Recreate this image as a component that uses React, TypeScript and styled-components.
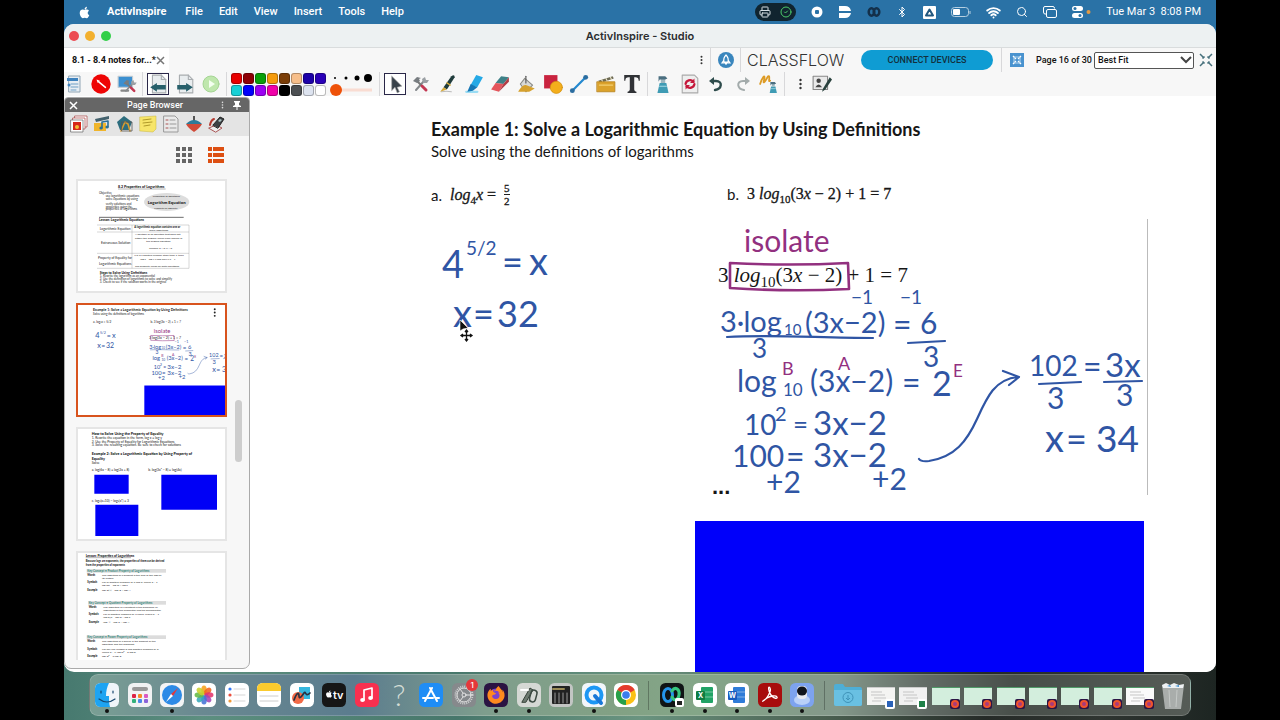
import React from "react";
import styled, { createGlobalStyle } from "styled-components";
import { FaApple, FaFirefoxBrowser } from "react-icons/fa";
import { Bluetooth, Wifi, Search, Printer, CircleCheck } from "lucide-react";

const ui = `Roboto, "Noto Sans", sans-serif`;
const mac = `Inter, "Liberation Sans", sans-serif`;
const INK = "#2f55a4";
const PLUM = "#92307f";

const Global = createGlobalStyle`
  * { box-sizing: border-box; }
  body { margin: 0; background: #000; }
  button, select { font: inherit; color: inherit; border: 0; padding: 0; background: none; }
  svg { display: block; flex: none; }
`;

const Screen = styled.div`
  height: 100vh;
  padding: 0 5%;
  background: #000;
`;
const Desktop = styled.div`
  height: 100%;
  display: flex;
  flex-direction: column;
  overflow: hidden;
  background:
    linear-gradient(#2a72a6, #2a72a6) top / 100% 48px no-repeat,
    linear-gradient(90deg, #47796f 0%, #5d8f80 12%, #47776b 34%, #6a9480 50%, #4a5f50 66%, #262b28 80%, #2f3531 90%, #1d2522 100%);
`;

/* menu bar */
const MenuBar = styled.header`
  flex: none;
  height: 24px;
  display: flex;
  align-items: center;
  padding: 0 15px 0 14px;
  color: #fff;
  font: 500 11px/24px Roboto, sans-serif;
`;
const MenuItem = styled.button<{ $strong?: boolean }>`
  margin-left: 16px;
  padding-right: ${(p) => (p.$strong ? 3 : 0)}px;
  font-weight: ${(p) => (p.$strong ? 700 : 500)};
`;
const Status = styled.div`
  margin-left: auto;
  display: flex;
  align-items: center;
  gap: 15px;
`;
const Pill = styled.div`
  display: flex;
  align-items: center;
  justify-content: space-between;
  width: 41px;
  height: 18px;
  padding: 0 4px;
  border-radius: 9px;
  background: #10242f;
`;
const Clock = styled.time`
  font: 400 11px/24px Roboto, sans-serif;
`;

/* window */
const Window = styled.main`
  flex: 1;
  min-height: 0;
  display: flex;
  flex-direction: column;
  border-radius: 10px;
  overflow: hidden;
  background: #fff;
`;
const TitleBar = styled.div`
  flex: none;
  height: 24px;
  display: grid;
  grid-template-columns: 1fr auto 1fr;
  align-items: center;
  padding: 0 5px;
  background: #edf1f2;
  border-bottom: 1px solid #d9dcdd;
  color: #2b2d2f;
  font: 600 11px/22px ${mac};
`;
const Lights = styled.div`
  display: flex;
  gap: 6px;
`;
const Light = styled.button<{ $color: string }>`
  width: 10px;
  height: 10px;
  border-radius: 50%;
  background: ${(p) => p.$color};
`;
const Bar = styled.div`
  flex: none;
  height: 24px;
  display: flex;
  align-items: center;
  background: #f7f7f7;
  color: #111;
  font: 500 9px/14px ${ui};
  white-space: nowrap;
`;
const Tab = styled.div`
  height: 24px;
  width: 105px;
  display: flex;
  align-items: center;
  justify-content: space-between;
  padding: 0 8px;
  background: #fff;
  font-weight: 700;
`;
const Rule = styled.div<{ $gap?: number }>`
  flex: none;
  width: 1px;
  height: 24px;
  margin: 0 ${(p) => p.$gap ?? 5}px;
  background: #d8d8da;
`;
const Right = styled.div`
  margin-left: auto;
  padding-right: 3px;
  display: flex;
  align-items: center;
`;
const Brand = styled.a`
  width: 102px;
  color: #333;
  text-decoration: none;
  font: 300 16px/24px ${mac};
`;
const Connect = styled.button`
  width: 132px;
  height: 20px;
  margin-left: 12px;
  border-radius: 10px;
  background: #0f9cd3;
  color: #12303d;
  font-weight: 500;
`;
const PageCount = styled.span`
  width: 58px;
  margin-left: 12px;
`;
const FitWrap = styled.label`
  display: flex;
  align-items: center;
  width: 100px;
  height: 17px;
  margin-right: 5px;
  border: 1px solid #555;
  border-radius: 2px;
  background: #fff;
`;
const Fit = styled.select`
  flex: 1;
  appearance: none;
  padding-left: 3px;
  line-height: 14px;
`;
const Group = styled.div<{ $w?: number }>`
  flex: none;
  display: flex;
  justify-content: space-between;
  align-items: center;
  width: ${(p) => (p.$w ? `${p.$w}px` : "auto")};
`;
const Tool = styled.button<{ $on?: boolean }>`
  width: 22px;
  height: 22px;
  display: grid;
  place-items: center;
  border: 1px solid ${(p) => (p.$on ? "#2a2748" : "transparent")};
  background: ${(p) => (p.$on ? "#fff" : "none")};
`;
const Palette = styled.div`
  display: grid;
  grid-template-columns: repeat(8, 11px);
  gap: 1px;
`;
const Swatch = styled.button<{ $c: string }>`
  height: 11px;
  border: 1px solid #0004;
  border-radius: 3px;
  background: ${(p) => p.$c};
`;

/* body */
const Body = styled.div`
  flex: 1;
  min-height: 0;
  display: flex;
`;
const Panel = styled.aside`
  flex: none;
  width: 186px;
  margin: 1px 0 3px;
  display: flex;
  flex-direction: column;
  overflow: hidden;
  border: 1px solid #aaa;
  border-radius: 4px 4px 7px 7px;
  background: #f7f7f7;
`;
const PanelHead = styled.div`
  flex: none;
  height: 14px;
  display: grid;
  grid-template-columns: 20px 1fr 20px;
  align-items: center;
  padding: 0 8px 0 4px;
  background: #666;
  color: #fff;
  text-align: center;
  font: 500 9px/14px ${ui};
`;
const PanelTools = styled.div`
  flex: none;
  height: 24px;
  display: flex;
  align-items: center;
  gap: 1px;
  padding-left: 3px;
  background: #e4e4e4;
`;
const Views = styled.div`
  flex: none;
  display: flex;
  justify-content: flex-end;
  gap: 16px;
  padding: 11px 25px 16px;
`;
const Scroller = styled.div`
  flex: 1;
  min-height: 0;
  display: flex;
  justify-content: space-between;
  margin-bottom: 8px;
  padding: 0 7px 0 11px;
`;
const Thumbs = styled.div`
  width: 151px;
  overflow: hidden;
  display: flex;
  flex-direction: column;
  gap: 10px;
`;
const Thumb = styled.button<{ $on?: boolean }>`
  flex: none;
  width: 151px;
  height: 114px;
  border: 2px solid ${(p) => (p.$on ? "#d8531d" : "#e5e5e5")};
  background: #fff;
  overflow: hidden;
`;
const Knob = styled.div`
  width: 7px;
  height: 62px;
  margin-top: 221px;
  border-radius: 4px;
  background: #cdcdcd;
`;

/* flipchart page */
const Board = styled.section`
  flex: 1;
  min-width: 0;
  position: relative;
  overflow: hidden;
  background: #fff;
  color: #161616;
`;
const Placed = styled.div<{ $x: number; $y: number }>`
  position: absolute;
  left: ${(p) => p.$x}px;
  top: ${(p) => p.$y}px;
  white-space: nowrap;
`;
const Heading = styled(Placed)`
  font: 700 18px/20px Lato, sans-serif;
`;
const Lead = styled(Placed)`
  font: 400 15px/20px Lato, sans-serif;
`;
const Problem = styled(Placed)<{ $big?: boolean }>`
  display: flex;
  align-items: center;
  font: ${(p) => (p.$big ? "400 21px/24px" : "400 16px/20px")} "Liberation Serif", serif;
  -webkit-text-stroke: ${(p) => (p.$big ? "0" : "0.3px #161616")};
  sub { font-size: ${(p) => (p.$big ? 15 : 11)}px; line-height: 1px; }
`;
const Letter = styled.span`
  margin-right: 8px;
  font: 400 15px/20px Lato, sans-serif;
  -webkit-text-stroke: 0;
`;
const Fraction = styled.span`
  display: inline-flex;
  flex-direction: column;
  margin-left: 8px;
  font: 400 11px/12px "Liberation Serif", serif;
  span + span { border-top: 1px solid #222; }
`;
const Dots = styled(Placed)`
  font: 700 22px/20px "Liberation Sans", sans-serif;
`;
const InkSheet = styled.svg`
  position: absolute;
  inset: 0;
  width: 100%;
  height: 100%;
`;

/* dock */
const Dock = styled.nav`
  flex: none;
  height: 42px;
  margin: 2px 25px 4px;
  padding: 0 1px;
  display: flex;
  border: 1px solid #ffffff30;
  border-radius: 9px;
  background: linear-gradient(90deg, #7a9f94 0%, #6a8991 10%, #5b7c8e 24%, #7f9e8d 36%, #82a184 48%, #84a688 55%, #84988a 68%, #626b65 76%, #484f4a 84%, #555b56 100%);
`;
const DockItem = styled.button`
  position: relative;
  flex: 1;
  display: flex;
  flex-direction: column;
  align-items: center;
  padding-top: 8px;
`;
const Running = styled.span`
  width: 4px;
  height: 4px;
  margin-top: 2px;
  border-radius: 50%;
  background: #111;
`;
const DockRule = styled.div`
  flex: none;
  width: 1px;
  margin: 6px 7px 5px 6px;
  background: #0004;
`;
const Badge = styled.span`
  position: absolute;
  top: 4px;
  right: 2px;
  width: 12px;
  height: 12px;
  border-radius: 50%;
  background: #e5383b;
  color: #fff;
  font: 500 8px/12px ${mac};
`;

type Note = [number, number, number, string, string?];
const notes: Note[] = [
  [442, 278, 38, "4"], [466, 255, 19, "5/2"], [502, 275, 36, "="], [529, 275, 38, "x"],
  [453, 327, 38, "x"], [473, 327, 36, "="], [497, 327, 36, "32"],
  [744, 252, 30, "isolate", PLUM],
  [851, 304, 19, "−1"], [900, 304, 19, "−1"],
  [720, 332, 29, "3·log"], [784, 335, 15, "10"], [805, 333, 29, "(3x−2)"], [893, 336, 32, "="], [920, 334, 30, "6"],
  [752, 358, 26, "3"], [923, 367, 28, "3"],
  [782, 375, 18, "B", PLUM], [838, 370, 18, "A", PLUM], [953, 377, 17, "E", PLUM],
  [737, 392, 30, "log"], [783, 396, 17, "10"], [810, 392, 30, "(3x−2)"], [902, 394, 32, "="], [932, 396, 34, "2"],
  [744, 435, 28, "10"], [775, 421, 20, "2"], [793, 434, 26, "="], [813, 435, 33, "3x−2"],
  [732, 467, 30, "100"], [786, 468, 32, "="], [813, 467, 33, "3x−2"],
  [766, 493, 30, "+2"], [872, 490, 30, "+2"],
  [1029, 376, 28, "102"], [1083, 378, 32, "="], [1105, 377, 33, "3x"],
  [1047, 409, 30, "3"], [1116, 406, 30, "3"],
  [1045, 452, 38, "x"], [1066, 452, 36, "="], [1096, 452, 37, "34"],
];

const Ink = () => (
  <g>
    <g fontFamily="Lato, sans-serif" fill={INK}>
      {notes.map(([x, y, s, t, c], i) => (
        <text key={i} x={x} y={y} fontSize={s} fill={c ?? INK}>{t}</text>
      ))}
    </g>
    <g fill="none" stroke={INK} strokeWidth="2.2" strokeLinecap="round" strokeLinejoin="round">
      <path d="M727 337C770 334 820 338 873 338M908 343l37-2M1039 384l42-2M1104 382l38-1" />
      <path d="M919 459q2 3 10 2c26-4 38-20 48-42s18-40 41-42M1003 371l16 6-10 8" />
      <path stroke={PLUM} strokeWidth="2.6" d="M730 263q60 3 118 0l1 26q-60 3-119-1z" />
    </g>
    <path d="M1147.5 219v276" stroke="#bbb" />
    <rect x="695" y="521" width="449" height="400" fill="#0000fa" />
  </g>
);

/* thumbnails */
const Lines = ({ rows, size = 9 }: { rows: [number, number, string, number?][]; size?: number }) => (
  <>
    {rows.map(([x, y, t, bold], i) => (
      <text key={i} x={x} y={y} fontSize={size} fontWeight={bold ? 900 : 400}>{t}</text>
    ))}
  </>
);
const tf = "Lato, sans-serif";
const ThumbOne = () => (
  <svg width="147" height="110" viewBox="41 255 441 330" fontFamily={tf} fill="#222">
    <Lines size={11} rows={[[161, 276, "8.2 Properties of Logarithms", 1]]} />
    <path d="M161 279h143" stroke="#222" />
    <Lines rows={[[104, 294, "Objective"], [124, 303, "use logarithmic equations"], [124, 311, "solve equations by using"], [124, 327, "verify solutions and"], [124, 335, "properties using the"], [124, 343, "properties of logarithms"]]} />
    <ellipse cx="307" cy="318" rx="68" ry="27" fill="#ddd" />
    <Lines size={8} rows={[[265, 302, "Properties of Equations"], [270, 339, "Property of Equality"]]} />
    <text x="250" y="323" fontSize="13" fontWeight="900">Logarithm Equation</text>
    <path d="M104 364h254" stroke="#222" strokeWidth="2" />
    <Lines size={10} rows={[[104, 376, "Lesson:  Logarithmic Equations", 1], [106, 402, "Logarithmic Equation"], [110, 444, "Extraneous Solution"], [101, 490, "Property of Equality for"], [104, 507, "Logarithmic Equations"]]} />
    <path d="M98 387h276v130H98M98 408h276M98 472h276M203 387v130" fill="none" stroke="#888" />
    <Lines size={8} rows={[[210, 397, "A logarithmic equation contains one or", 1], [255, 406, "more logarithms"], [212, 418, "A solution of an equation that does not"], [212, 428, "satisfy the original; check each answer in"], [246, 438, "the original equation"], [254, 460, "Choose: b > 0, x > 0"], [210, 481, "If b is a positive number other than 1, then"], [228, 491, "log x = log y if and only if x = y"], [212, 514, "The property holds for both equations"]]} />
    <Lines rows={[[106, 544, "1. Rewrite the logarithm as an exponential"], [106, 553, "2. Use the definition of logarithms to solve and simplify"], [106, 562, "3. Check to see if the solution works in the original"]]} />
    <Lines size={10} rows={[[106, 534, "Steps to Solve Using Definitions", 1]]} />
  </svg>
);
const ThumbTwo = () => (
  <svg width="147" height="110" viewBox="356 106 752 567" fontFamily={tf} fill="#161616">
    <text x="431" y="135" fontSize="18" fontWeight="700">Example 1: Solve a Logarithmic Equation by Using Definitions</text>
    <text x="431" y="156" fontSize="15">Solve using the definitions of logarithms</text>
    <text x="431" y="199" fontSize="16">a.  log₄x = 5/2</text>
    <text x="727" y="199" fontSize="16">b.  3 log(3x − 2) + 1 = 7</text>
    <text x="719" y="282" fontSize="19">3 log(3x − 2) + 1 = 7</text>
    <Ink />
    <g fill="#222"><circle cx="1058" cy="128" r="5" /><circle cx="1058" cy="145" r="5" /><circle cx="1058" cy="162" r="5" /></g>
  </svg>
);
const ThumbThree = () => (
  <svg width="147" height="110" viewBox="41 403 441 330" fontFamily={tf} fill="#161616">
    <Lines size={11} rows={[[82, 420, "How to Solve Using the Property of Equality", 1], [82, 482, "Example 2: Solve a Logarithmic Equation by Using Property of", 1], [82, 495, "Equality", 1]]} />
    <Lines size={10} rows={[[82, 433, "1.  Rewrite the equation in the form, log x = log y"], [82, 444, "2.  Use the Property of Equality for Logarithmic Equations"], [82, 455, "3.  Solve the resulting equation. Be sure to check for solutions"], [82, 507, "Solve"], [82, 530, "a.  log(6x − 8) = log(2x + 8)"], [252, 530, "b.  log(3x² − 8) = log(4x)"], [82, 622, "c.  log₂(x+10) − log₂(x²) = 3"]]} />
    <g fill="#0000f6"><path d="M90 540h103v57H90zM291 540h167v105H291zM93 630h129v94H93z" /></g>
  </svg>
);
const Block = ({ x, y, title, rows }: { x: number; y: number; title: string; rows: string[] }) => (
  <g>
    <rect x={x} y={y} width={305 - x} height="11" fill="#dcdcdc" />
    <text x={x + 2} y={y + 9} fontSize="9" fontWeight="700" fill="#34877b">{title}</text>
    <Lines size={8} rows={[[x + 2, y + 21, "Words", 1], [x + 2, y + 43, "Symbols", 1], [x + 2, y + 65, "Example", 1]]} />
    <Lines size={8} rows={rows.map((r, i) => [x + 46, y + [21, 30, 43, 52, 65][i], r])} />
  </g>
);
const ThumbFour = () => (
  <svg width="147" height="110" viewBox="41 220 441 330" fontFamily={tf} fill="#222">
    <Lines size={10} rows={[[64, 231, "Lesson: Properties of Logarithms", 1]]} />
    <path d="M64 234h136" stroke="#222" />
    <Lines size={8} rows={[[64, 248, "Because logs are exponents, the properties of them can be derived", 1], [64, 258, "from the properties of exponents", 1]]} />
    <Block x={67} y={268} title="Key Concept • Product Property of Logarithms" rows={["The logarithm of a product is the sum of the logs of", "its factors", "For all positive numbers m, n and b, where b ≠ 1", "log mn = log m + log n", "log₂ 8(4) = log₂ 8 + log₂ 4"]} />
    <Block x={71} y={364} title="Key Concept • Quotient Property of Logarithms" rows={["The logarithm of a quotient is the difference of", "logarithms of the numerator and the denominator", "For all positive numbers m, n and b, where b ≠ 1", "log m/n = log m − log n", "log₂ ¾ = log₂ 3 − log₂ 4"]} />
    <Block x={67} y={467} title="Key Concept • Power Property of Logarithms" rows={["The logarithm of a power is the product of the", "logarithm and the exponent", "For any real number p and positive numbers m, b,", "where b ≠ 1, log mᵖ = p log m", "log₂ 8² = 2 log₂ 8"]} />
  </svg>
);

const Ico = ({ s = 20, children }: { s?: number; children: React.ReactNode }) => (
  <svg width={s} height={s} viewBox="0 0 18 18" fill="none" strokeLinecap="round" strokeLinejoin="round">{children}</svg>
);
const Wrench = () => (
  <g><path d="M4 15L12 6" stroke="#85898c" strokeWidth="2" /><path d="M10 4l3-2 1 3 3 0-2 3-4 0z" fill="#9ba0a4" /><path d="M4 5l5 5" stroke="#777" strokeWidth="2" /><path d="M1 6l4-4 4 1-2 1 1 2-3 2z" fill="#777c80" /><path d="M10 11l4 4" stroke="#c33852" strokeWidth="3" /></g>
);
const Doc = ({ flip }: { flip?: boolean }) => (
  <Ico><path d="M4 1h8l4 4v12H4z" fill="#e9edef" stroke="#a9adb0" /><path d="M12 1v4h4" stroke="#a9adb0" /><path d={flip ? "M2 10h8V8l6 4-6 4v-2H2z" : "M16 10H8V8l-6 4 6 4v-2h8z"} fill="#27606b" /></Ico>
);
const Pen = ({ c }: { c: string }) => (
  <Ico><path d="M3 16q5-1 9 0" stroke="#bbb" /><path d="M5 12L12 2q3-2 3 1L8 14z" fill={c} /><path d="M8 8l3 2" stroke="#d6aa3b" strokeWidth="1.2" /><path d="M2 16l3-4 3 2z" fill="#d6aa3b" /></Ico>
);
const Spray = () => (
  <g><path d="M6 8h6l2 9H4z" fill="#3f9bb4" /><path d="M7 4h4v4H7z" fill="#9eb7c0" /><path d="M5 2h6l2 2-2 1H6L5 7z" fill="#4b6f80" /><path d="M6 11h6" stroke="#a8dce6" /></g>
);

const tools2: [string, React.ReactNode, boolean?][] = [
  ["Select", <Ico><path d="M6 2v13l3-3 2 5 2-1-2-4 4-1z" fill="#39424a" stroke="#aaa" strokeWidth=".6" /></Ico>, true],
  ["Tools", <Ico s={18}><Wrench /></Ico>],
  ["Pen", <Pen c="#203c3c" />],
  ["Highlighter", <Ico><path d="M2 16h10" stroke="#9adcf3" strokeWidth="2" /><path d="M11 1l6 2-5 9-6-2z" fill="#25a9e6" /><path d="M6 9l6 3-4 3-5 1z" fill="#1577b6" /></Ico>],
  ["Eraser", <Ico><path d="M10 2l7 1-5 6-7-1z" fill="#3e8087" /><path d="M5 8l7 1-4 7-7-2z" fill="#e4555c" /><path d="M12 9l5-6v4l-9 9z" fill="#b13c45" /></Ico>],
  ["Fill", <Ico><path d="M7 4l7 6-6 6-5-7z" fill="#d8d9d6" stroke="#8a8a84" /><path d="M8 8V2" stroke="#555" /><path d="M1 16q4-7 7-6l8 3-5 3z" fill="#d6a12e" /></Ico>],
  ["Shape", <Ico><rect x="1" y="1" width="12" height="12" fill="#c9233f" /><circle cx="12" cy="12" r="5.5" fill="#f3ae1c" stroke="#cf8d0e" strokeWidth=".6" /></Ico>],
  ["Connector", <Ico><path d="M3 15L15 3" stroke="#2489cf" strokeWidth="2" /><circle cx="15" cy="3" r="2.2" fill="#2b6da0" /><circle cx="3" cy="15" r="2.2" fill="#2b6da0" /></Ico>],
  ["Clips", <Ico><path d="M2 6l13-4 1 2-12 4z" fill="#6d6a53" /><path d="M5 5l1 2M9 4l1 2M13 3l1 2" stroke="#e9e3c8" /><path d="M1 7h16v9H1z" fill="#dba22b" stroke="#b5811a" strokeWidth=".7" /><path d="M3 10h12" stroke="#f3cf72" /></Ico>],
];
const tools3: [string, React.ReactNode][] = [
  ["Clear", <Ico><Spray /></Ico>],
  ["Reset", <Ico><path d="M2 1h11l3 3v13H2z" fill="#eee" stroke="#aaa" /><path d="M5 9a4 4 0 017-2M13 9a4 4 0 01-7 2" stroke="#c5173a" strokeWidth="2" /><path d="M13 4v4H9zM5 14v-4h4z" fill="#c5173a" /></Ico>],
  ["Undo", <Ico s={18}><path d="M5 6h4c7 0 6 8-1 9" stroke="#2e4c4c" strokeWidth="2.4" /><path d="M7 2v8L2 6z" fill="#2e4c4c" /></Ico>],
  ["Redo", <Ico s={18}><path d="M13 6H9c-7 0-6 8 1 9" stroke="#a3abab" strokeWidth="2" /><path d="M11 2v8l5-4z" fill="#a3abab" /></Ico>],
  ["Clear ink", <Ico><path d="M1 9c2-6 4-8 4-6s-2 6 0 4 3-6 4-5-1 6 1 4" stroke="#dd9b25" strokeWidth="1.6" /><g transform="translate(7 6) scale(.65)"><Spray /></g></Ico>],
];
const colors = ["#e80000", "#8f0006", "#0aa00a", "#f59b0c", "#7a3d06", "#f6be8a", "#1c00a8", "#2a00b8", "#18d0d6", "#0000fb", "#9b00f2", "#f000a8", "#000", "#4c4f52", "#dde3ef", "#fff"];
const browserTools: [string, React.ReactNode][] = [
  ["Pages", <><path d="M5 1h12v11H5z" fill="#fff" stroke="#a44" strokeWidth=".7" /><path d="M3 3h12v11H3z" fill="#fff" stroke="#a44" strokeWidth=".7" /><path d="M1 5h12v12H1z" fill="#fff" stroke="#666" strokeWidth=".7" /><path d="M3 7h8v8H3z" fill="#d62718" /><circle cx="7" cy="12" r="2" fill="#f1bd35" /></>],
  ["Resources", <><path d="M2 4l14-3v3L3 7z" fill="#43616d" /><path d="M1 8h12v8H1z" fill="#f0b52b" /><path d="M9 13V7l6-1v6" stroke="#2a6f95" strokeWidth="1.6" /><circle cx="8" cy="13" r="1.6" fill="#2a6f95" /><circle cx="14" cy="12" r="1.6" fill="#2a6f95" /></>],
  ["Objects", <><path d="M8 1l8 6-3 8H4L1 7z" fill="#2d6d7e" /><path d="M5 16l4-9 3 2 2 7" stroke="#d79c30" strokeWidth="1.6" /><path d="M6 7h10v9H6z" stroke="#555" strokeWidth=".8" /></>],
  ["Notes", <><path d="M1 2l16-1v13l-3 3-13-1z" fill="#f7e56a" stroke="#cbb93c" strokeWidth=".5" /><path d="M4 5l8-1M4 8l9-1M5 11l6-1" stroke="#b09a2a" /></>],
  ["Properties", <><path d="M2 1h11l3 3v13H2z" fill="#e9e9e9" stroke="#999" /><path d="M4 5h2M4 9h2M4 13h2" stroke="#a55" /><path d="M8 5h5M8 9h6M8 13h6" stroke="#999" /></>],
  ["Actions", <><path d="M8 1h2v5H8z" fill="#555" /><path d="M1 9q8-8 16 0z" fill="#2c7a99" /><path d="M1 9h16q-2 4-8 8-6-4-8-8z" fill="#d04a38" /></>],
  ["Voting", <><path d="M1 13l7-3 6 3-6 4z" fill="#eee" stroke="#a55" /><path d="M5 10l7-8 4 2-6 9z" fill="#3c4144" stroke="#222" /><path d="M10 6l2-2 2 1-2 2z" fill="#a9c1c0" /><path d="M2 10q1-5 4-6" stroke="#b33a2f" strokeWidth="2" /></>],
];

const App24 = ({ bg, children }: { bg: string; children?: React.ReactNode }) => (
  <svg width="24" height="24" viewBox="0 0 24 24" fill="none" strokeLinecap="round" strokeLinejoin="round">
    <rect width="24" height="24" rx="5.5" fill={bg} />{children}
  </svg>
);
const petals = ["#f7a21b", "#f2651e", "#e5346b", "#a346b5", "#4574d6", "#37a9b8", "#63b946", "#c9cf2c"];
const Office = ({ c, l, d }: { c: string; l: string; d: string }) => (
  <App24 bg="#fff"><rect x="8" y="4" width="12" height="16" rx="1" fill={c} /><path d="M8 9h12M8 14h12" stroke="#fff6" /><rect x="3" y="8" width="9" height="9" rx="1" fill={d} />
    <text x="7.5" y="15" fontSize="7" fontWeight="700" fill="#fff" textAnchor="middle" fontFamily="Inter">{l}</text></App24>
);
const Mini = ({ bg, kind }: { bg: string; kind: "ff" | "w" | "x" }) => (
  <svg width="30" height="26" viewBox="0 0 30 26">
    <rect x="1" y="4" width="28" height="18" fill={bg} /><path d="M1 4.5h28" stroke={kind === "ff" ? "#4f9a68" : "#ccc"} strokeWidth="1" />
    {bg !== "#d3eedd" && <path d="M5 9h11M5 12h14M8 15h12M6 18h9" stroke="#c5c5c5" />}
    <rect x="19" y="16" width="10" height="10" rx="2" fill={kind === "ff" ? "#2c1545" : "#fff"} />
    {kind === "ff" ? <><circle cx="24" cy="21" r="4" fill="#f0542c" /><circle cx="24" cy="21" r="2" fill="#a83a7c" /></> : <path d="M21 18h6v6h-6z" fill={kind === "w" ? "#2a62b8" : "#1f8148"} />}
  </svg>
);
const Sep = "sep";
type DockEntry = typeof Sep | [string, React.ReactNode, boolean?];
const dock: DockEntry[] = [
  ["Finder", <App24 bg="#f0f5f9"><path d="M5.5 0H14c-2 4-3 8-3 13h3c0 4 0 8 1 11H5.5A5.5 5.5 0 010 18.500v-13A5.500 5.500 0 015.500 0z" fill="#1ea4f2" /><path d="M6 8v2M18 8v2M4 16q8 6 16 0" stroke="#17476e" strokeWidth="1.2" /></App24>, true],
  ["Launchpad", <App24 bg="#f1f2f3"><rect x="4" y="4" width="16" height="4" rx="2" fill="#999" />{["#d24", "#f58a27", "#db5ac1", "#32b07b", "#4b86e8", "#8b63d8"].map((c, i) => <rect key={c} x={4 + (i % 3) * 6} y={i < 3 ? 11 : 16} width="4" height="4" rx="1" fill={c} />)}</App24>],
  ["Safari", <App24 bg="#f3f4f5"><circle cx="12" cy="12" r="10" fill="#2d8ae6" /><path d="M18 5l-5 8-2-2z" fill="#e6373a" /><path d="M6 19l5-8 2 2z" fill="#fff" /></App24>, true],
  ["Photos", <App24 bg="#fff">{petals.map((c, i) => <ellipse key={c} cx="12" cy="7" rx="2.8" ry="4.5" fill={c} opacity=".88" transform={`rotate(${i * 45} 12 12)`} />)}</App24>],
  ["Reminders", <App24 bg="#fff"><circle cx="5" cy="6" r="1.6" fill="#3478f6" /><circle cx="5" cy="12" r="1.6" fill="#ea4e3d" /><circle cx="5" cy="18" r="1.6" fill="#f19a37" /><path d="M9 6h11M9 12h11M9 18h11" stroke="#d5d5d5" /></App24>],
  ["Notes", <App24 bg="#fff"><path d="M0 8V5.5A5.5 5.5 0 015.5 0h13A5.5 5.5 0 0124 5.5V8z" fill="#fbcb2e" /><path d="M3 13h18M3 18h18" stroke="#ccc" /></App24>],
  ["Freeform", <App24 bg="#fff"><path d="M9 4h11v12H9z" fill="#35b7de" /><circle cx="8" cy="15" r="6" fill="#f16a47" /><path d="M4 17c3-8 5-8 5-4s3 0 5-3 1 5 6 0" stroke="#2a3242" strokeWidth="1.7" /></App24>],
  ["TV", <App24 bg="#161616"><g transform="translate(3 7)"><FaApple size={8} color="#fff" /></g><text x="11" y="16" fontSize="11" fontWeight="600" fill="#fff" fontFamily="Inter">tv</text></App24>],
  ["Music", <App24 bg="#f9304f"><path d="M9 17V7l8-2v10" stroke="#fff" strokeWidth="1.7" /><ellipse cx="7.5" cy="17" rx="2.3" ry="2" fill="#fff" /><ellipse cx="15.5" cy="15" rx="2.3" ry="2" fill="#fff" /></App24>],
  ["Missing app", <svg width="24" height="24" viewBox="0 0 24 24"><text x="12" y="23" fontSize="30" fontWeight="300" textAnchor="middle" fill="#d4ddd6" fontFamily="Lato">?</text></svg>],
  ["App Store", <App24 bg="#1f8df5"><path d="M13 5L6 18M11 5l7 13M4 15h10M17 15h3" stroke="#fff" strokeWidth="2" /></App24>],
  ["Settings", <><App24 bg="#86898c"><circle cx="12" cy="12" r="8.5" stroke="#cfd1d2" strokeWidth="2" strokeDasharray="1 1" strokeLinecap="butt" /><circle cx="12" cy="12" r="7" stroke="#e3e3e3" /><circle cx="12" cy="12" r="2" stroke="#e3e3e3" /><path d="M14 12h5M11 10L8 6M11 14l-3 4" stroke="#e3e3e3" /></App24><Badge>1</Badge></>],
  ["Firefox", <App24 bg="#2b1443"><g transform="translate(3 3)"><circle cx="9" cy="9.5" r="7" fill="#7a43cf" /><FaFirefoxBrowser size={18} color="#ff8a1f" /></g></App24>, true],
  ["ActivInspire", <App24 bg="#d5d8d4"><path d="M5 19l8-14 3 2-7 12z" fill="#6d7a70" stroke="#354038" /><rect x="13" y="7" width="6" height="12" rx="3" stroke="#3c4a42" strokeWidth="1.5" transform="rotate(15 16 14)" /><path d="M4 7h7" stroke="#fff" strokeWidth="2" /></App24>, true],
  ["Piano", <App24 bg="#c3c6c4"><rect x="3" y="3" width="18" height="18" rx="1" fill="#222" /><path d="M4 6h11" stroke="#9b8b57" strokeWidth="2" /><path d="M6 10v10M10 10v10M14 10v10M18 10v10" stroke="#999" /></App24>],
  ["QuickTime", <App24 bg="#f2f6fa"><circle cx="12" cy="12" r="7.5" stroke="#1c97f4" strokeWidth="4" /><path d="M13 13l6 7" stroke="#1877d8" strokeWidth="4" /></App24>, true],
  ["Chrome", <App24 bg="#fff"><circle cx="12" cy="12" r="10" fill="#fbc116" /><path d="M12 12L3.3 7a10 10 0 0117.4 0z" fill="#e33b2e" /><path d="M12 12L3.3 7A10 10 0 0012 22z" fill="#27a04a" /><circle cx="12" cy="12" r="5" fill="#fff" /><circle cx="12" cy="12" r="3.8" fill="#3b7ded" /></App24>],
  Sep,
  ["Webex", <App24 bg="#101415"><ellipse cx="8" cy="12" rx="4.5" ry="6.5" stroke="#2495ea" strokeWidth="3" /><path d="M12 8c3-5 8-2 7 4s-5 6-7 2" stroke="#37c77f" strokeWidth="3" /><rect x="15" y="15" width="9" height="9" rx="2" fill="#fff" /><rect x="17" y="18" width="5" height="4" fill="#222" /></App24>, true],
  ["Excel", <Office c="#21a366" d="#107c41" l="X" />, true],
  ["Word", <Office c="#2f7cd8" d="#185abd" l="W" />, true],
  ["Acrobat", <App24 bg="#a80d0d"><path d="M5 18c3-1 9-10 7-13s-2 3 1 7 7 4 6 2-7-1-10 1-5 4-4 3" stroke="#fff" strokeWidth="1.3" /></App24>, true],
  ["Camera", <App24 bg="#7da3ef"><ellipse cx="12" cy="17" rx="8" ry="5" fill="#b9d0f8" /><rect x="7" y="3" width="10" height="13" rx="4" fill="#e6e9ef" /><ellipse cx="12" cy="8" rx="5" ry="4.5" fill="#10141c" /></App24>, true],
  Sep,
  ["Downloads", <svg width="28" height="25" viewBox="0 0 28 25" fill="none"><path d="M0 3q0-2 2-2h7l2 3h15q2 0 2 2v15q0 2-2 2H2q-2 0-2-2z" fill="#4eaed6" /><path d="M0 7h28v14q0 2-2 2H2q-2 0-2-2z" fill="#69c0e2" /><circle cx="14" cy="14.5" r="5" stroke="#3f93b8" /><path d="M14 12v5m-2-2l2 2 2-2" stroke="#3f93b8" /></svg>],
  ["Document", <Mini bg="#f4f4f2" kind="w" />],
  ["Workbook", <Mini bg="#f1f1f1" kind="x" />],
  ...Array.from({ length: 6 }, (_, i): DockEntry => [`Browser window ${i + 1}`, <Mini bg="#d3eedd" kind="ff" />]),
  ["Browser window 7", <Mini bg="#fafafa" kind="ff" />],
  ["Trash", <svg width="24" height="26" viewBox="0 0 24 26"><path d="M1 2h22l-3 24H4z" fill="#a9adab" /><path d="M1 2l4-2 4 2 4-2 5 2 5-1-1 4H2z" fill="#eef1f3" /><path d="M6 3l3-1 1 2zM14 3l4-1v2z" fill="#3d8fd0" /><path d="M8 7l1 17M16 7l-1 17" stroke="#c5c9c7" /></svg>],
];

const Kebab = ({ c = "#333", h = 12 }: { c?: string; h?: number }) => (
  <svg width="3" height={h} viewBox="0 0 3 12" fill={c}><circle cx="1.5" cy="2" r="1.2" /><circle cx="1.5" cy="6" r="1.2" /><circle cx="1.5" cy="10" r="1.2" /></svg>
);

export default function App() {
  return (
    <Screen>
      <Global />
      <Desktop>
        <MenuBar>
          <FaApple size={13} />
          <MenuItem $strong>ActivInspire</MenuItem>
          {["File", "Edit", "View", "Insert", "Tools", "Help"].map((m) => <MenuItem key={m}>{m}</MenuItem>)}
          <Status>
            <Pill><Printer size={12} color="#d5dde2" /><CircleCheck size={12} color="#4ccb6b" /></Pill>
            <svg width="12" height="12" viewBox="0 0 12 12"><circle cx="6" cy="6" r="5.5" fill="#fff" /><rect x="4" y="4" width="4" height="4" rx="1" fill="#2a72a6" /></svg>
            <svg width="14" height="12" viewBox="0 0 14 12"><path d="M1 0h6q5 0 6 5H1zM1 7h12q-1 5-6 5H1z" fill="#fff" /></svg>
            <svg width="14" height="12" viewBox="0 0 14 12" fill="none" stroke="#14304a" strokeWidth="2.5"><ellipse cx="4.5" cy="6" rx="2.8" ry="3.7" /><ellipse cx="9.5" cy="6" rx="2.8" ry="3.7" /></svg>
            <Bluetooth size={12} />
            <svg width="13" height="13" viewBox="0 0 13 13"><rect width="13" height="13" rx="1" fill="#fff" /><path d="M6.5 3.5l3.5 6H3z" fill="none" stroke="#23587f" strokeWidth="2" strokeLinejoin="round" /></svg>
            <svg width="20" height="11" viewBox="0 0 20 11"><rect x=".5" y=".5" width="17" height="9" rx="3" fill="none" stroke="#b5cfe1" /><rect x="2" y="2" width="7" height="6" rx="1" fill="#fff" /><path d="M19 4v3" stroke="#b5cfe1" /></svg>
            <Wifi size={15} strokeWidth={3} />
            <Search size={12} strokeWidth={2} />
            <svg width="14" height="12" viewBox="0 0 14 12" fill="none" stroke="#fff"><path d="M3 8H2Q.5 8 .5 6V2Q.5.5 2 .5h8q1.5 0 1.5 2" /><rect x="3.5" y="3.5" width="10" height="8" rx="1.5" /></svg>
            <svg width="19" height="12" viewBox="0 0 19 12"><rect x="0" y="0" width="11" height="5" rx="2.5" fill="#fff" /><rect x="0" y="7" width="11" height="5" rx="2.5" fill="#fff" /><circle cx="3" cy="2.5" r="1.5" fill="#2a72a6" /><circle cx="8" cy="9.5" r="1.5" fill="#2a72a6" /><circle cx="16.5" cy="6" r="2" fill="#e39a42" /></svg>
            <Clock>Tue Mar 3&nbsp; 8:08 PM</Clock>
          </Status>
        </MenuBar>

        <Window>
          <TitleBar>
            <Lights>
              <Light $color="#ec4b52" aria-label="Close" /><Light $color="#f2b02e" aria-label="Minimise" /><Light $color="#32cf48" aria-label="Zoom" />
            </Lights>
            <span>ActivInspire - Studio</span>
          </TitleBar>
          <Bar>
            <Tab>
              <span>8.1 - 8.4 notes for...*</span>
              <svg width="9" height="9" viewBox="0 0 9 9" stroke="#777" strokeWidth="1.5"><path d="M1 1l7 7M8 1L1 8" /></svg>
            </Tab>
            <Right>
              <Kebab h={10} />
              <Rule $gap={7} />
              <svg width="16" height="16" viewBox="0 0 16 16" fill="none"><circle cx="8" cy="8" r="8" fill="#3a86bd" /><path d="M8 3q3 3 2 7H6q-1-4 2-7zM6 8l-2 3h8l-2-3M7 12h2" stroke="#fff" strokeWidth="1.2" /></svg>
              <Rule $gap={6} />
              <Brand href="#">CLASSFLOW</Brand>
              <Connect>CONNECT DEVICES</Connect>
              <Rule $gap={8} />
              <svg width="14" height="14" viewBox="0 0 14 14" fill="none"><rect width="14" height="14" fill="#4a93cf" /><path d="M3 3l3 3M11 3L8 6M3 11l3-3M11 11L8 8" stroke="#fff" strokeWidth="1.3" /><path d="M4 4h6v6H4z" stroke="#b7d7ef" /></svg>
              <PageCount>Page 16 of 30</PageCount>
              <FitWrap>
                <Fit aria-label="Page zoom" defaultValue="Best Fit"><option>Best Fit</option></Fit>
                <svg width="14" height="12" viewBox="0 0 14 12" fill="none" stroke="#444" strokeWidth="2"><path d="M2 3l5 5 5-5" /></svg>
              </FitWrap>
              <svg width="14" height="14" viewBox="0 0 14 14" fill="none" stroke="#47707c"><path d="M1 1l4 4M13 1L9 5M1 13l4-4M13 13L9 9" strokeWidth="1.5" /><path d="M5 3v2H3M9 3v2h2M5 11V9H3M9 11V9h2" strokeWidth="1" /></svg>
            </Right>
          </Bar>
          <Bar>
            <Group $w={74}>
              <Tool aria-label="Profile"><Ico s={18}><path d="M3 1h11v16H3z" fill="#e8eef3" stroke="#91a6b5" /><path d="M1 3h11v3H1z" fill="#3f83be" /><path d="M5 9h7M5 12h7M5 15h5" stroke="#6f9fc5" /><circle cx="3" cy="10" r="1.5" fill="#3f83be" /></Ico></Tool>
              <Tool aria-label="Annotate"><Ico><circle cx="9" cy="9" r="8.7" fill="#ee0505" /><path d="M7 7l6 5" stroke="#fff" strokeWidth="1.4" /><path d="M5 5l3 1-2 2z" fill="#fff" /></Ico></Tool>
              <Tool aria-label="Desktop tools"><Ico><path d="M1 2h13v10H1z" fill="#3b8fd0" stroke="#c3ccd2" /><path d="M4 15h6" stroke="#888" strokeWidth="2" /><g transform="translate(5 4) scale(.75)"><Wrench /></g></Ico></Tool>
            </Group>
            <Rule $gap={4} />
            <Group $w={75}>
              <Tool $on aria-label="Previous page"><Doc /></Tool>
              <Tool aria-label="Next page"><Doc flip /></Tool>
              <Tool aria-label="Start"><Ico s={18}><circle cx="9" cy="9" r="8" fill="#bfe7ad" stroke="#a5d494" /><path d="M7 5l6 4-6 4z" fill="#f4fff0" /></Ico></Tool>
            </Group>
            <Rule $gap={4} />
            <Palette>{colors.map((c) => <Swatch key={c} $c={c} aria-label={c} />)}</Palette>
            <svg width="49" height="24" viewBox="0 0 49 24"><path d="M13 18h33" stroke="#f9dcd2" strokeWidth="3" /><circle cx="10" cy="18" r="6" fill="#ee5108" /><circle cx="9" cy="6" r="1" /><circle cx="20" cy="6" r="1.5" /><circle cx="31" cy="6" r="2.5" /><circle cx="42" cy="6" r="4" /></svg>
            <Rule $gap={4} />
            <Group $w={259}>
              {tools2.map(([n, icon, on]) => <Tool key={n} $on={on} aria-label={n}>{icon}</Tool>)}
              <Tool aria-label="Text"><Ico><path d="M2 1h14v5h-1c0-2-1-3-3-3h-1v11c0 1 1 2 2 2v1H5v-1c1 0 2-1 2-2V3H6C4 3 3 4 3 6H2z" fill="#303236" /></Ico></Tool>
            </Group>
            <Rule $gap={4} />
            <Group $w={128}>{tools3.map(([n, icon]) => <Tool key={n} aria-label={n}>{icon}</Tool>)}</Group>
            <Rule $gap={4} />
            <Group $w={44}>
              <Tool aria-label="More"><Kebab h={14} /></Tool>
              <Tool aria-label="Design mode"><Ico><path d="M1 2h13v12H1z" fill="#e9e9e9" stroke="#888" /><circle cx="6" cy="6" r="2" fill="#444" /><path d="M3 12q3-5 6 0z" fill="#444" /><path d="M16 3l-6 10-1 3 3-2 6-9z" fill="#28403c" /></Ico></Tool>
            </Group>
          </Bar>

          <Body>
            <Panel>
              <PanelHead>
                <svg width="9" height="9" viewBox="0 0 9 9" stroke="#fff" strokeWidth="1.5"><path d="M1 1l7 7M8 1L1 8" /></svg>
                <span>Page Browser</span>
                <Group><Kebab c="#ddd" h={8} /><svg width="8" height="9" viewBox="0 0 8 9" fill="#fff"><path d="M1 0h6v1L6 2v2l2 1v1H0V5l2-1V2L1 1zM3.500 6h1v3h-1z" /></svg></Group>
              </PanelHead>
              <PanelTools>
                {browserTools.map(([n, icon]) => <Tool key={n} aria-label={n}><Ico s={18}>{icon}</Ico></Tool>)}
              </PanelTools>
              <Views>
                <svg width="16" height="16" viewBox="0 0 16 16" fill="#666">{[0, 1, 2].map((r) => [0, 1, 2].map((c) => <rect key={`${r}${c}`} x={c * 6} y={r * 6} width="4" height="4" />))}</svg>
                <svg width="16" height="16" viewBox="0 0 16 16" fill="#dd4f12">{[0, 1, 2].map((r) => <path key={r} d={`M0 ${r * 6}h4v4H0zM5 ${r * 6}h11v4H5z`} />)}</svg>
              </Views>
              <Scroller>
                <Thumbs>
                  <Thumb aria-label="Page 15"><ThumbOne /></Thumb>
                  <Thumb $on aria-label="Page 16"><ThumbTwo /></Thumb>
                  <Thumb aria-label="Page 17"><ThumbThree /></Thumb>
                  <Thumb aria-label="Page 18"><ThumbFour /></Thumb>
                </Thumbs>
                <Knob />
              </Scroller>
            </Panel>

            <Board>
              <Heading $x={181} $y={23}>Example 1: Solve a Logarithmic Equation by Using Definitions</Heading>
              <Lead $x={181} $y={45}>Solve using the definitions of logarithms</Lead>
              <Problem $x={181} $y={86}>
                <Letter>a.</Letter><span><i>log</i><sub>4</sub><i>x</i> =</span>
                <Fraction><span>5</span><span>2</span></Fraction>
              </Problem>
              <Problem $x={477} $y={88}>
                <Letter>b.</Letter><span>3 <i>log</i><sub>10</sub>(3<i>x</i> − 2) + 1 = 7</span>
              </Problem>
              <Problem $big $x={468} $y={167}>
                <span>3 <i>log</i><sub>10</sub>(3<i>x</i> − 2) + 1 = 7</span>
              </Problem>
              <Dots $x={462} $y={381}>...</Dots>
              <InkSheet>
                <g transform="translate(-250 -96)"><Ink /></g>
                <g transform="translate(-250 -96)">
                  <path d="M460 320v11l3-2 5-1z" fill="#111" stroke="#fff" strokeWidth=".6" />
                  <path d="M466.5 330v11M461 335.5h11M465 332l1.5-2 1.5 2M465 339l1.5 2 1.5-2M463 334l-2 1.5 2 1.5M470 334l2 1.5-2 1.5" fill="none" stroke="#111" strokeWidth="1.3" />
                </g>
              </InkSheet>
            </Board>
          </Body>
        </Window>

        <Dock>
          {dock.map((d, i) =>
            d === Sep ? <DockRule key={i} /> : (
              <DockItem key={i} aria-label={d[0] as string}>{d[1]}{d[2] && <Running />}</DockItem>
            ),
          )}
        </Dock>
      </Desktop>
    </Screen>
  );
}
